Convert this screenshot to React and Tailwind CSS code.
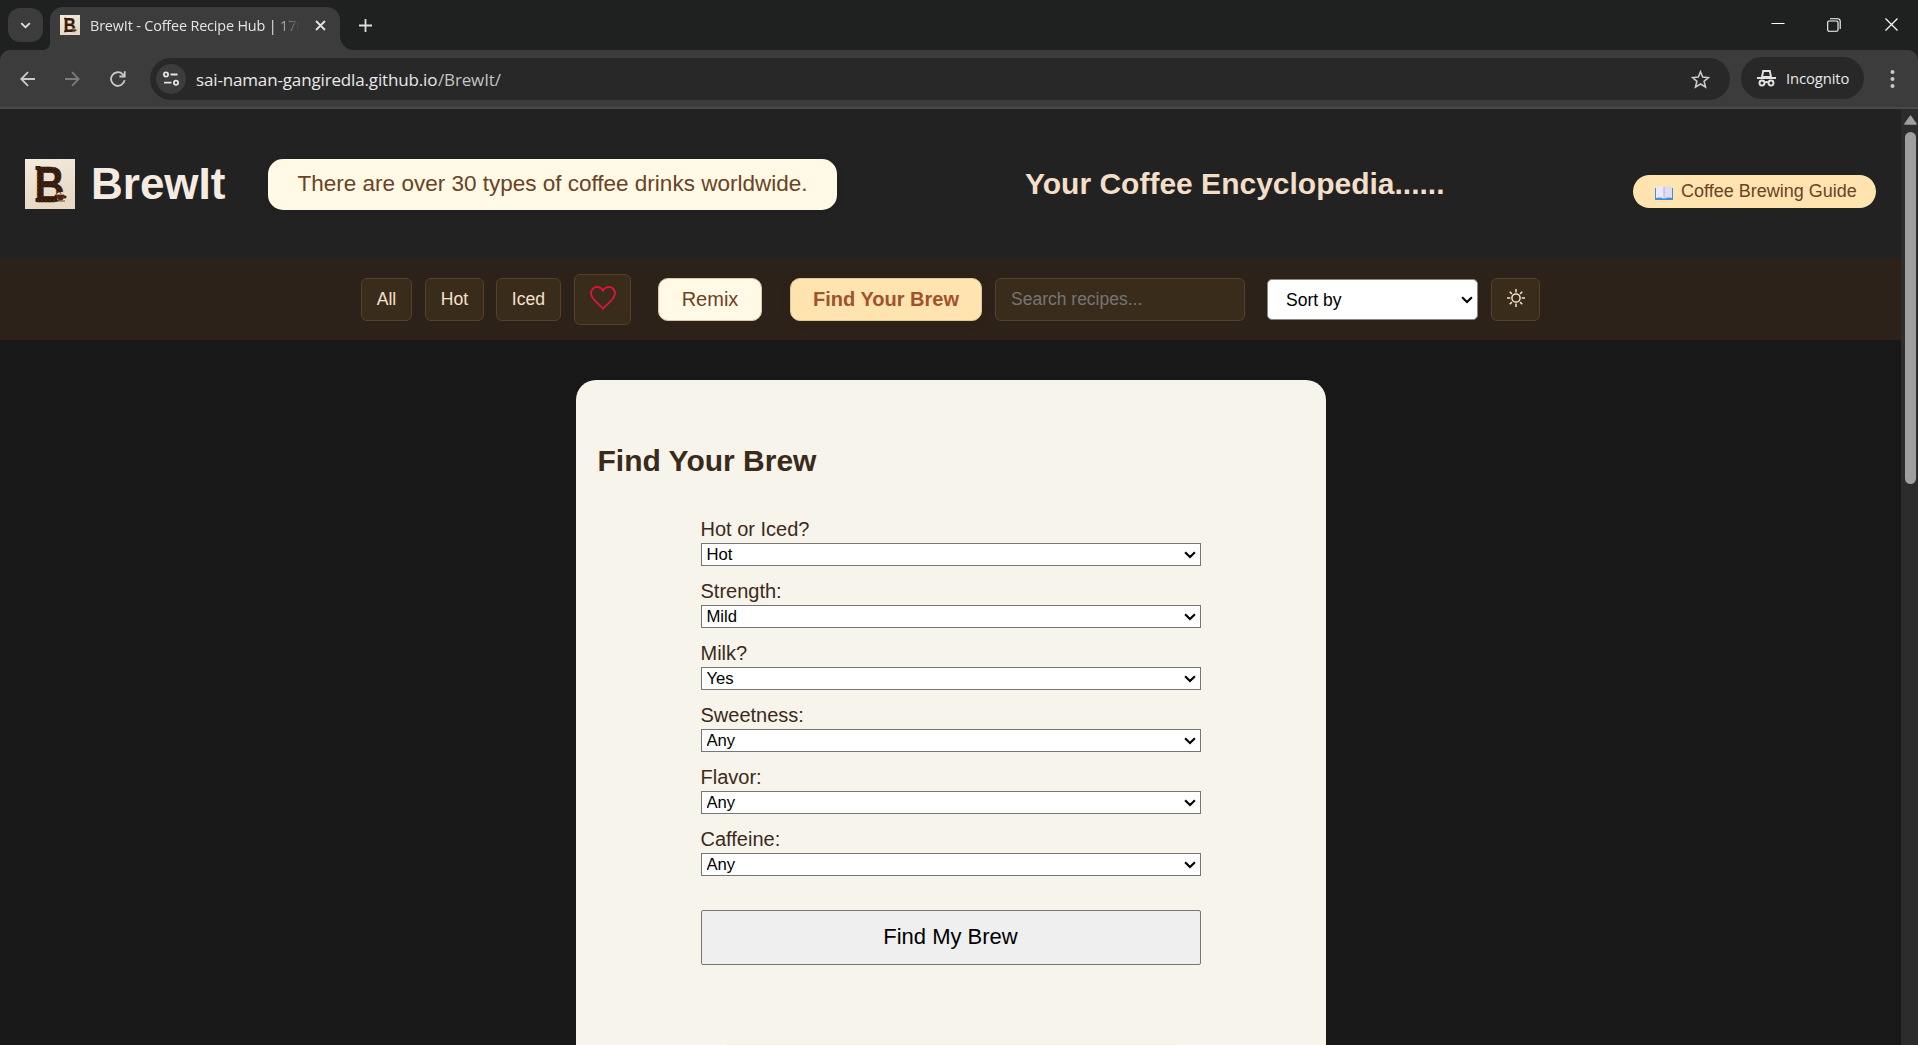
import React from "react";

const FIELDS = [
  ["Hot or Iced?", "Hot"],
  ["Strength:", "Mild"],
  ["Milk?", "Yes"],
  ["Sweetness:", "Any"],
  ["Flavor:", "Any"],
  ["Caffeine:", "Any"],
];

function Chevron({ className }) {
  return (
    <svg className={className} viewBox="0 0 12 8" fill="none">
      <path d="M1.1 1.3 6 6.1l4.9-4.8" stroke="currentColor" strokeWidth="2.1" />
    </svg>
  );
}

function BeanLogo({ className, id }) {
  return (
    <svg className={className} viewBox="0 0 50 50" overflow="visible">
      <defs>
        <linearGradient id={id + "bg"} x1="0" y1="0" x2="0.3" y2="1">
          <stop offset="0" stopColor="#f4eadd" />
          <stop offset="1" stopColor="#e6d9c5" />
        </linearGradient>
        <pattern id={id + "beans"} width="4" height="4" patternUnits="userSpaceOnUse">
          <rect width="4" height="4" fill="#2f1709" />
          <ellipse cx="1" cy="1" rx="1" ry="0.6" fill="#6a4125" />
          <ellipse cx="3" cy="3" rx="0.6" ry="0.9" fill="#4f2b16" />
        </pattern>
      </defs>
      <rect width="50" height="50" fill={`url(#${id}bg)`} />
      <text
        x="9.5"
        y="42.5"
        fontFamily="Liberation Sans"
        fontWeight="700"
        fontSize="50"
        textLength="30"
        lengthAdjust="spacingAndGlyphs"
        fill={`url(#${id}beans)`}
        stroke={`url(#${id}beans)`}
        strokeWidth="0.6"
      >
        B
      </text>
      <path d="M10.500 7h5v4h-5zM10.500 39h5v4h-5z" fill={`url(#${id}beans)`} />
      <path d="M31.500 35q3-3.500 10-1l-1 7h-8z" fill="#e8dcc9" />
      <path d="M32 36h7c0 3-1 5-3 5h-1c-2 0-3-2-3-5zM39 37h2v2h-2M31 42h9" fill="#4a2512" stroke="#4a2512" strokeWidth="0.8" />
      <path d="M35.500 31q-1 2 .500 4" stroke="#4a2512" fill="none" strokeWidth="0.8" />
    </svg>
  );
}

function TabStrip() {
  return (
    <div className="flex h-[50px] bg-[#1f2120]">
      <button className="mt-2 ml-2 grid h-[34px] w-[35px] place-items-center rounded-[12px] bg-[#3c3c3c] text-[#e3e3e3]">
        <Chevron className="h-[7px] w-[11px]" />
      </button>
      <div className="flex items-end">
        <div className="h-[15px] w-[7px] overflow-hidden bg-[#3c3c3c]">
          <div className="size-full rounded-br-[12px] bg-[#1f2120]" />
        </div>
      </div>
      <div className="mt-[7px] flex h-[43px] w-[290px] items-start rounded-t-[13px] bg-[#3c3c3c]">
        <BeanLogo id="fav" className="mt-2 ml-[10px] size-5 flex-none" />
        <div className="mt-[8px] ml-[10px] w-[220px] flex-none whitespace-nowrap font-['Open_Sans',sans-serif] text-[14.4px] leading-[21px] tracking-[-0.16px] text-[#e3e3e3] [mask-image:linear-gradient(to_right,black_184px,transparent_210px)]">
          BrewIt - Coffee Recipe Hub | 170
        </div>
        <svg className="mt-[13px] ml-[5px] size-[11px] flex-none" viewBox="0 0 11 11">
          <path d="m1 1 9 9M10 1l-9 9" stroke="#e3e3e3" strokeWidth="1.8" />
        </svg>
      </div>
      <div className="flex items-end">
        <div className="h-[15px] w-[15px] bg-[#3c3c3c]">
          <div className="size-full rounded-bl-[14px] bg-[#1f2120]" />
        </div>
      </div>
      <svg className="mt-[19px] ml-[4px] size-[13px]" viewBox="0 0 13 13">
        <path d="M6.5 0v13M0 6.5h13" stroke="#dedede" strokeWidth="1.8" />
      </svg>
      <div className="ml-auto flex">
        <svg className="mt-[18px] mr-[42px] h-[13px] w-[14px]" viewBox="0 0 14 13">
          <path d="M0.5 5.5h13" stroke="#fff" />
        </svg>
        <svg className="mt-[18px] mr-[44px] size-[14px]" viewBox="0 0 14 14" fill="none" stroke="#fff" strokeWidth="1.1">
          <rect x="0.7" y="3" width="10.3" height="10.3" rx="1.2" />
          <path d="M3 .8h7.8a2.4 2.4 0 0 1 2.4 2.4V11" />
        </svg>
        <svg className="mt-[18px] mr-[20px] size-[13px]" viewBox="0 0 13 13">
          <path d="m.5.5 12 12M12.5.5l-12 12" stroke="#fff" strokeWidth="1.2" />
        </svg>
      </div>
    </div>
  );
}

function Toolbar() {
  return (
    <div className="bg-[#1f2120]">
      <div className="flex h-[59px] items-start rounded-t-[10px] border-b-2 border-[#4a4a4a] bg-[#3c3c3c] pt-2">
        <svg className="mt-[13px] ml-5 size-4" viewBox="0 0 16 16" fill="none" stroke="#c9c9c9" strokeWidth="1.8">
          <path d="M15 8H1.5M8 1.2 1.3 8 8 14.8" />
        </svg>
        <svg className="mt-[13px] ml-[28px] size-4" viewBox="0 0 16 16" fill="none" stroke="#7b7b7b" strokeWidth="1.8">
          <path d="M1 8h13.5M8 1.2 14.7 8 8 14.8" />
        </svg>
        <svg className="mt-[13px] ml-[30px] size-4" viewBox="0 0 16 16" fill="none" stroke="#c9c9c9" strokeWidth="1.8">
          <path d="M14.6 9.2A6.8 6.8 0 1 1 12.8 3.3L14.7 5.2M14.7.3v5.2H9.4" />
        </svg>
        <div className="ml-[24px] flex h-[42px] w-[1580px] items-center rounded-full bg-[#282828] pl-[6px]">
          <div className="grid size-[30px] place-items-center rounded-full bg-[#3c3c3c]">
            <svg className="h-4 w-4" viewBox="0 0 16 16" fill="none" stroke="#e3e3e3" strokeWidth="1.8">
              <circle cx="3" cy="3.5" r="2.1" />
              <path d="M7.5 3.5h7M1 11.7h7.5" />
              <circle cx="13" cy="11.7" r="2.1" />
            </svg>
          </div>
          <div className="mt-px ml-[10px] font-['Open_Sans',sans-serif] text-[17px] leading-6 tracking-[-0.15px] text-[#e8e8e8]">
            <span className="inline-block w-[242px] whitespace-nowrap">sai-naman-gangiredla.github.io</span>
            <span className="text-[#c4c4c4]">/BrewIt/</span>
          </div>
          <svg className="mr-5 ml-auto size-[19px]" viewBox="0 0 19 19" fill="none" stroke="#c9c9c9" strokeWidth="1.6">
            <path d="m9.5 1.8 2.2 5.3 5.8.5-4.4 3.8 1.4 5.6-5-3-5 3 1.4-5.6L1.5 7.6l5.8-.5z" />
          </svg>
        </div>
        <div className="-mt-px ml-[11px] flex h-[42px] w-[123px] items-center rounded-full bg-[#282828] pl-4">
          <svg className="h-[18px] w-[19px]" viewBox="0 0 19 18" fill="none" stroke="#e3e3e3" strokeWidth="1.9">
            <path d="M5 8 6.200 2h6.600L14 8z" fill="none" />
            <path d="M0 9h19M8 13.5q1.5-1 3 0" />
            <circle cx="5" cy="14" r="2.5" />
            <circle cx="14" cy="14" r="2.5" />
          </svg>
          <span className="ml-[10px] font-['Open_Sans',sans-serif] text-[14.8px] tracking-[-0.1px] text-[#e8e8e8]">Incognito</span>
        </div>
        <svg className="mt-[11px] ml-[26px] h-[20px] w-[5px]" viewBox="0 0 5 20" fill="#c9c9c9">
          <circle cx="2.5" cy="3" r="2" />
          <circle cx="2.5" cy="10" r="2" />
          <circle cx="2.5" cy="17" r="2" />
        </svg>
      </div>
    </div>
  );
}

function SiteHeader() {
  return (
    <header className="flex h-[150px] bg-[#222222]">
      <BeanLogo id="logo" className="mt-[50px] ml-[25px] size-[50px]" />
      <h1 className="mt-[50px] ml-[16px] w-[177px] text-[44px] leading-[50px] font-bold text-[#f5ebe0]">BrewIt</h1>
      <div className="mt-[50px] flex h-[51px] w-[569px] items-center justify-center rounded-[15px] bg-[#fff9e6] pb-px text-[22.5px] whitespace-nowrap text-[#6b4226] shadow-[0_3px_10px_rgba(0,0,0,0.08)]">
        There are over 30 types of coffee drinks worldwide.
      </div>
      <h2 className="mt-[57px] ml-[188px] w-[608px] text-[30px] leading-[36px] font-bold text-[#f3dec8]">
        Your Coffee Encyclopedia......
      </h2>
      <a className="mt-[66px] flex h-[33px] w-[243px] items-center rounded-full bg-[#ffe4b0] pb-px pl-[21px] text-[18px] whitespace-nowrap text-[#6b4226]">
        <svg className="mt-[3px] h-[16px] w-[20px]" viewBox="0 0 20 16">
          <path d="M1 3h18v12H1z" fill="#3f8fdd" />
          <path d="M2 1.5q4-1.5 8 .7v11.5q-4-1.8-8-.7z" fill="#eee9fa" />
          <path d="M18 1.5q-4-1.5-8 .7v11.5q4-1.8 8-.7z" fill="#e2dcf2" />
          <path d="M10 2v12" stroke="#a79fc4" strokeWidth="0.8" />
        </svg>
        <span className="ml-[7px]">Coffee Brewing Guide</span>
      </a>
    </header>
  );
}

function FilterBar() {
  return (
    <nav className="flex h-[81px] items-center justify-center bg-[#2d2219] text-[17.6px] text-[#f5e0cb]">
      <button className="h-[43px] w-[51px] rounded-[6px] border border-[#54412c] bg-[#3a2c1b] pb-px">All</button>
      <button className="ml-[13px] h-[43px] w-[59px] rounded-[6px] border border-[#54412c] bg-[#3a2c1b] pb-px">Hot</button>
      <button className="ml-[12px] h-[43px] w-[65px] rounded-[6px] border border-[#54412c] bg-[#3a2c1b] pb-px">Iced</button>
      <button className="ml-[13px] grid h-[51px] w-[57px] justify-center rounded-[6px] border border-[#54412c] bg-[#3a2c1b] pt-[11px]">
        <svg className="h-[24px] w-[26px]" viewBox="0 0 26 24" fill="none">
          <path
            d="M13 4.600C11.500 2 9.500 1 7 1 3.500 1 1 3.700 1 7.200c0 5.800 6.500 9.300 12 15.500C18.500 16.500 25 13 25 7.200 25 3.700 22.500 1 19 1c-2.500 0-4.500 1-6 3.600z"
            stroke="#dc143c"
            strokeWidth="1.9"
          />
        </svg>
      </button>
      <button className="ml-[27px] h-[43px] w-[104px] rounded-[10px] border border-[#dcc9a0] bg-[#fff9e6] pb-[2px] text-[20px] text-[#6b4226]">Remix</button>
      <button className="ml-[28px] h-[43px] w-[192px] rounded-[10px] border border-[#dcc9a0] bg-[#ffe4b0] pb-[2px] text-[20px] font-bold text-[#a0522d] shadow-[0_2px_10px_rgba(60,30,0,0.15)]">
        Find Your Brew
      </button>
      <input
        className="ml-[13px] h-[43px] w-[250px] rounded-[6px] border border-[#54412c] bg-[#3a2c1b] px-[15px] text-[17.5px] placeholder:text-[#757575]"
        placeholder="Search recipes..."
      />
      <div className="relative ml-[22px] h-[41px] w-[211px]">
        <select className="size-full appearance-none rounded-[5px] border border-[#8b8580] bg-white pt-px pl-[18px] text-[17.5px] text-black">
          <option>Sort by</option>
        </select>
        <Chevron className="pointer-events-none absolute top-[17px] right-[5px] h-[8px] w-[12px] text-black" />
      </div>
      <button className="ml-[13px] grid h-[43px] w-[49px] justify-center rounded-[6px] border border-[#54412c] bg-[#3a2c1b] pt-[10px]">
        <svg className="size-[18px]" viewBox="0 0 18 18" fill="none" stroke="#f3dec8" strokeWidth="1.5">
          <circle cx="9" cy="9" r="4.1" />
          <path d="M9 0v3.400M9 14.600V18M0 9h3.400M14.600 9H18M2.700 2.700l2.200 2.200M13.100 13.100l2.200 2.200M15.300 2.700l-2.200 2.200M4.900 13.100l-2.200 2.200" />
        </svg>
      </button>
    </nav>
  );
}

function BrewFinder() {
  return (
    <section className="mx-auto mt-10 flex h-[665px] w-[750px] flex-col rounded-t-[20px] bg-[#f7f4ec] pt-[63px]">
      <h2 className="ml-[22px] text-[30px] leading-[36px] font-bold text-[#3b2a1a]">Find Your Brew</h2>
      <form className="mx-auto mt-[38px] flex w-[500px] flex-col gap-4">
        {FIELDS.map(([label, value]) => (
          <label key={label} className="block h-[46px] text-[20px] leading-[23px] text-[#3b2a1a]">
            <span className="block h-[26px] pt-px">{label}</span>
            <span className="relative block h-[23px] w-[500px] text-black">
              <select className="block h-[23px] w-full appearance-none border border-[#767676] bg-white pt-px pl-[5px] text-[16.67px] leading-[20px]">
                <option>{value}</option>
              </select>
              <Chevron className="pointer-events-none absolute top-[8px] right-[5px] h-[8px] w-[12px]" />
            </span>
          </label>
        ))}
        <button className="mt-[21px] h-[55px] w-full rounded-[2px] border border-[#767676] bg-[#efefef] pb-[2px] text-[22px] text-black">
          Find My Brew
        </button>
      </form>
      <div className="mx-auto mt-auto h-px w-[450px] bg-[#f2efe5]" />
    </section>
  );
}

function Scrollbar() {
  return (
    <div className="flex h-full w-[17px] flex-col items-center bg-[#2c2c2c] pt-[6px] pl-[2px]">
      <svg className="h-[10px] w-[13px]" viewBox="0 0 13 10">
        <path d="M6.500 1.200 12 9H1z" fill="#9f9f9f" stroke="#9f9f9f" strokeWidth="1.500" strokeLinejoin="round" />
      </svg>
      <div className="mt-[7px] h-[352px] w-[11px] rounded-full bg-[#9f9f9f]" />
    </div>
  );
}

export default function App() {
  return (
    <div className="flex h-[1045px] w-[1918px] flex-col overflow-hidden bg-[#181818] font-['Liberation_Sans',Arial,sans-serif]">
      <TabStrip />
      <Toolbar />
      <div className="flex min-h-0 flex-1">
        <main className="w-[1901px]">
          <SiteHeader />
          <FilterBar />
          <BrewFinder />
        </main>
        <Scrollbar />
      </div>
    </div>
  );
}
